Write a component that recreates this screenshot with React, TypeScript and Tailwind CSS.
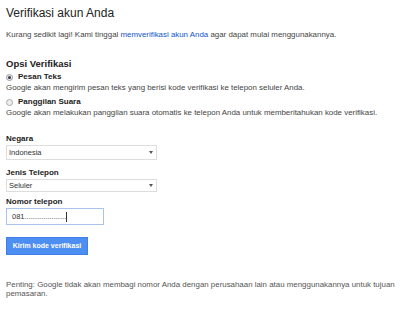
function Arrow() {
  return <span className="w-0 h-0 border-l-[2.5px] border-r-[2.5px] border-t-[3px] border-l-transparent border-r-transparent border-t-[#555]" />
}

export default function App() {
  return (
    <div className="w-[400px] h-[309px] bg-white text-[#222] pl-[6px] pt-[6px] font-['Liberation_Sans',Arial,sans-serif] overflow-hidden">
      <h1 className="text-[12px] leading-[14px] text-[#222]">Verifikasi akun Anda</h1>

      <p className="mt-[10px] text-[7.9px] leading-[10px] text-[#444]">
        Kurang sedikit lagi! Kami tinggal <span className="text-[#15c]">memverifikasi akun Anda</span> agar dapat mulai menggunakannya.
      </p>

      <h2 className="mt-[18px] text-[9.5px] leading-[12px] font-bold text-[#222]">Opsi Verifikasi</h2>

      <div className="mt-[2px]">
        <label className="flex items-center gap-[5px] text-[8px] leading-[10px] font-bold text-[#222]">
          <span className="w-[7px] h-[7px] rounded-full border border-[#999] bg-[#eee] flex items-center justify-center">
            <span className="w-[3px] h-[3px] rounded-full bg-[#335]" />
          </span>
          Pesan Teks
        </label>
        <p className="mt-[1px] text-[7.9px] leading-[10px] text-[#444]">
          Google akan mengirim pesan teks yang berisi kode verifikasi ke telepon seluler Anda.
        </p>
      </div>

      <div className="mt-[4px]">
        <label className="flex items-center gap-[5px] text-[8px] leading-[10px] font-bold text-[#222]">
          <span className="w-[7px] h-[7px] rounded-full border border-[#aaa] bg-[#eee]" />
          Panggilan Suara
        </label>
        <p className="mt-[1px] text-[7.9px] leading-[10px] text-[#444]">
          Google akan melakukan panggilan suara otomatis ke telepon Anda untuk memberitahukan kode verifikasi.
        </p>
      </div>

      <div className="mt-[16px]">
        <div className="text-[8px] leading-[10px] font-bold text-[#222]">Negara</div>
        <div className="mt-[1px] w-[151px] h-[15px] border border-[#ddd] flex items-center justify-between pl-[2px] pr-[3px] text-[7.5px] text-[#333]">
          <span>Indonesia</span>
          <Arrow />
        </div>
      </div>

      <div className="mt-[8px]">
        <div className="text-[8px] leading-[10px] font-bold text-[#222]">Jenis Telepon</div>
        <div className="mt-[1px] w-[151px] h-[13px] border border-[#ddd] flex items-center justify-between pl-[2px] pr-[3px] text-[7.5px] text-[#333]">
          <span>Seluler</span>
          <Arrow />
        </div>
      </div>

      <div className="mt-[5px]">
        <div className="text-[8px] leading-[10px] font-bold text-[#222]">Nomor telepon</div>
        <div className="mt-[1px] w-[98px] h-[17px] border border-[#a8c3ee] flex items-center pl-[5px] text-[7.5px] text-[#333]">
          <span>081....................</span>
          <span className="w-px h-[10px] bg-[#333]" />
        </div>
      </div>

      <button className="mt-[12px] w-[82px] h-[18px] bg-[#4d8ef2] border border-[#3f7fe6] text-white text-[7px] font-bold">
        Kirim kode verifikasi
      </button>

      <p className="mt-[25px] w-[392px] text-[7.9px] leading-[9px] text-[#555]">
        Penting: Google tidak akan membagi nomor Anda dengan perusahaan lain atau menggunakannya untuk tujuan pemasaran.
      </p>
    </div>
  )
}
